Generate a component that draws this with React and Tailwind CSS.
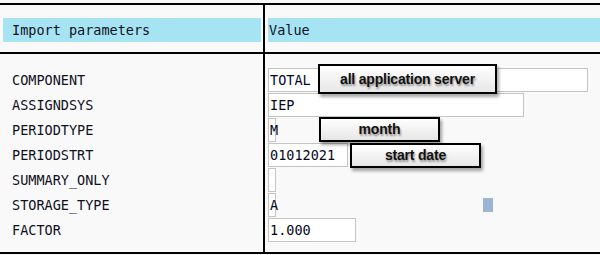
import React from 'react';

const rows = [
  { name: 'COMPONENT', value: 'TOTAL', w: 'w-[320px]' },
  { name: 'ASSIGNDSYS', value: 'IEP', w: 'w-[256px]' },
  { name: 'PERIODTYPE', value: 'M', w: 'w-[8px]' },
  { name: 'PERIODSTRT', value: '01012021', w: 'w-[80px]' },
  { name: 'SUMMARY_ONLY', value: '', w: 'w-[8px]' },
  { name: 'STORAGE_TYPE', value: 'A', w: 'w-[8px]' },
  { name: 'FACTOR', value: '1.000', w: 'w-[88px]' },
];

const callouts = [
  { text: 'all application server', cls: 'left-[318px] top-[64px] w-[179px] h-[30px]' },
  { text: 'month', cls: 'left-[319px] top-[117px] w-[121px] h-[25px]' },
  { text: 'start date', cls: 'left-[350px] top-[143px] w-[131px] h-[25px]' },
];

export default function App() {
  return (
    <div className="relative w-[600px] h-[255px] bg-[#f9f9f9] overflow-hidden font-['DejaVu_Sans_Mono',monospace] text-[13.5px] text-[#10101e]">
      <div className="mt-[3px] border-t-2 border-b-2 border-black">
        {/* header */}
        <div className="flex border-b-2 border-black">
          <div className="w-[265px] border-r-2 border-black pt-[13px] pb-[10px] pl-[3px] pr-[2px]">
            <div className="h-[24px] bg-[#a6e4f3] pl-[9px] flex items-center">Import parameters</div>
          </div>
          <div className="flex-1 pt-[13px] pb-[10px] pl-[3px]">
            <div className="h-[24px] bg-[#a6e4f3] pl-[1px] flex items-center">Value</div>
          </div>
        </div>
        {/* body */}
        <div className="flex">
          <div className="w-[265px] border-r-2 border-black pt-[14px] pb-[9px] pl-[12px]">
            {rows.map(r => (
              <div key={r.name} className="h-[25px] flex items-center">{r.name}</div>
            ))}
          </div>
          <div className="flex-1 pt-[14px] pb-[9px] pl-[3px] text-[#06061e]">
            {rows.map(r => (
              <div key={r.name} className="h-[25px]">
                <div className={`${r.w} h-[24px] border border-[#c4c4c4] bg-white flex items-center pl-[1px] whitespace-nowrap`}>{r.value}</div>
              </div>
            ))}
          </div>
        </div>
      </div>

      {callouts.map(c => (
        <div
          key={c.text}
          className={`absolute ${c.cls} border-2 border-black bg-gradient-to-b from-white to-[#e6e6e6] shadow-[2px_3px_3px_rgba(0,0,0,0.35)] flex items-center justify-center font-['Liberation_Sans',Arial,sans-serif] font-bold text-[14px] tracking-[-0.2px] text-[#111] [text-shadow:1px_2px_2px_rgba(0,0,0,0.4)]`}
        >
          {c.text}
        </div>
      ))}

      <div className="absolute left-[483px] top-[198px] w-[10px] h-[14px] bg-[#9cb5d3]" />
    </div>
  );
}
